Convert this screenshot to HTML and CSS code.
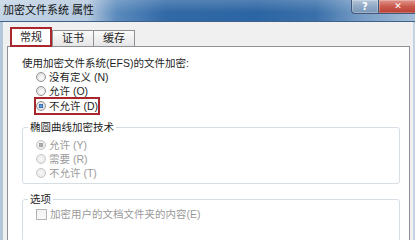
FILE: index.html
```html
<!DOCTYPE html>
<html lang="zh-CN">
<head>
<meta charset="utf-8">
<title>加密文件系统 属性</title>
<link rel="stylesheet" href="styles.css">
</head>
<body>
<div class="window">
  <div class="titlebar">
    <span class="title">加密文件系统 属性</span>
    <div class="caption-buttons">
      <span class="btn help">?</span>
      <span class="btn close">✕</span>
    </div>
  </div>
  <div class="body">
    <div class="tabs">
      <div class="tab active">常规</div>
      <div class="tab first">证书</div>
      <div class="tab">缓存</div>
    </div>
    <div class="panel">
      <div class="label">使用加密文件系统(EFS)的文件加密:</div>
      <div class="opt"><span class="radio"></span>没有定义 (N)</div>
      <div class="opt"><span class="radio"></span>允许 (O)</div>
      <div class="opt mark"><span class="radio on"></span>不允许 (D)</div>
      <fieldset class="group">
        <legend>椭圆曲线加密技术</legend>
        <div class="opt dis"><span class="radio on"></span>允许 (Y)</div>
        <div class="opt dis"><span class="radio"></span>需要 (R)</div>
        <div class="opt dis"><span class="radio"></span>不允许 (T)</div>
      </fieldset>
      <fieldset class="group second">
        <legend>选项</legend>
        <div class="opt dis"><span class="check"></span>加密用户的文档文件夹的内容(E)</div>
      </fieldset>
    </div>
  </div>
</div>
</body>
</html>
```

FILE: styles.css
```css
html, body {
  margin: 0;
  padding: 0;
  height: 100%;
}
body {
  font-family: "Liberation Sans", "Noto Sans CJK SC", sans-serif;
  font-size: 11px;
  color: #1e1e1e;
  background: #fff;
  overflow: hidden;
}
.window {
  width: 415px;
  height: 100vh;
  min-height: 224px;
  display: flex;
  flex-direction: column;
  overflow: hidden;
  background: #f0f0f0;
}
.titlebar {
  height: 21px;
  flex: none;
  display: flex;
  align-items: flex-start;
  border-bottom: 1px solid #3f6189;
  background:
    linear-gradient(rgba(255,255,255,0.18), rgba(255,255,255,0) 60%),
    linear-gradient(to right, #c4d5e6 0, #b5c9de 21%, #5c8bbd 28%, #3169a6 40%, #2c65a3 62%, #3a70aa 76%, #7299c3 86%, #a4bdd7 100%);
}
.title {
  padding: 3px 0 0 3px;
  line-height: 15px;
  color: #111;
}
.caption-buttons {
  margin-left: auto;
  margin-right: -3px;
  display: flex;
}
.btn {
  height: 13px;
  line-height: 13px;
  text-align: center;
  color: #fff;
  font-family: "DejaVu Sans", sans-serif;
  font-weight: bold;
  border: 1px solid #44597a;
  border-top: 0;
  box-shadow: inset 0 0 0 1px rgba(255,255,255,0.25);
}
.help {
  width: 26px;
  font-size: 10px;
  border-radius: 0 0 0 4px;
  background: linear-gradient(#b3c5d9, #8ca6c3 55%, #7b97b8);
}
.close {
  width: 38px;
  font-size: 9px;
  border-left: 0;
  border-radius: 0 0 4px 0;
  background: linear-gradient(#e0978e, #cb5a4e 50%, #b73d31);
}
.body {
  flex: 1;
  min-height: 0;
  display: flex;
  flex-direction: column;
  border-left: 3px solid #b3c7db;
  border-right: 2px solid #c3d3e3;
  padding: 5px 3px 0 4px;
}
.tabs {
  height: 19px;
  flex: none;
  display: flex;
  align-items: flex-end;
  padding-left: 3px;
}
.tab {
  height: 15px;
  line-height: 15px;
  padding: 0 9px;
  border: 1px solid #8e9096;
  border-bottom: 0;
  margin-left: -1px;
  background: linear-gradient(#fbfbfb, #e5e5e5);
  color: #1e1e1e;
}
.tab.first {
  margin-left: 0;
}
.tab.active {
  position: relative;
  z-index: 1;
  height: 16px;
  line-height: 16px;
  width: 38px;
  padding: 0;
  text-align: center;
  border: 2px solid #a8262c;
  margin-left: 0;
  margin-bottom: -1px;
  background: #fff;
}
.panel {
  flex: 1 0 auto;
  background: #fff;
  border: 1px solid #8e9096;
  padding: 9px 9px 20px 14px;
  font-size: 10.5px;
}
.label {
  line-height: 14px;
  height: 14px;
  white-space: nowrap;
}
.opt {
  display: flex;
  align-items: center;
  height: 14px;
  line-height: 14px;
  padding-left: 14px;
  white-space: nowrap;
}
.radio {
  width: 8px;
  height: 8px;
  border: 1px solid #939393;
  border-radius: 50%;
  margin-right: 3px;
  background: radial-gradient(circle at 60% 65%, #ffffff 0, #e8e8e8 55%, #cfcfcf 100%);
  flex: none;
}
.radio.on {
  background:
    radial-gradient(circle, #7fb0e6 0, #2b61a8 38%, rgba(43,97,168,0) 45%),
    radial-gradient(circle, #f4f4f4 0, #d9d9d9 100%);
}
.opt.mark {
  width: fit-content;
  border: 2px solid #a8262c;
  padding: 0;
  margin: -1px 0 -3px 12px;
}
.group {
  margin: 8px 0 0;
  border: 1px solid #d6dde3;
  border-radius: 3px;
  padding: 4px 0 3px 13px;
  min-width: 0;
}
.group.second {
  padding: 1px 0 20px 13px;
}
.group legend {
  padding: 0 2px;
  margin-left: -8px;
  line-height: 14px;
  color: #1e1e1e;
}
.group .opt {
  padding-left: 0;
}
.opt.dis {
  color: #9a9a9a;
}
.opt.dis .radio {
  border-color: #c6c6c6;
  background: radial-gradient(circle, #f7f7f7 0, #e6e6e6 100%);
}
.opt.dis .radio.on {
  background:
    radial-gradient(circle, #b9b9b9 0, #9d9d9d 38%, rgba(157,157,157,0) 45%),
    radial-gradient(circle, #f7f7f7 0, #e6e6e6 100%);
}
.check {
  width: 9px;
  height: 9px;
  border: 1px solid #b4b4b4;
  background: linear-gradient(#f1f1f1, #fafafa);
  margin-right: 3px;
  flex: none;
}
```
